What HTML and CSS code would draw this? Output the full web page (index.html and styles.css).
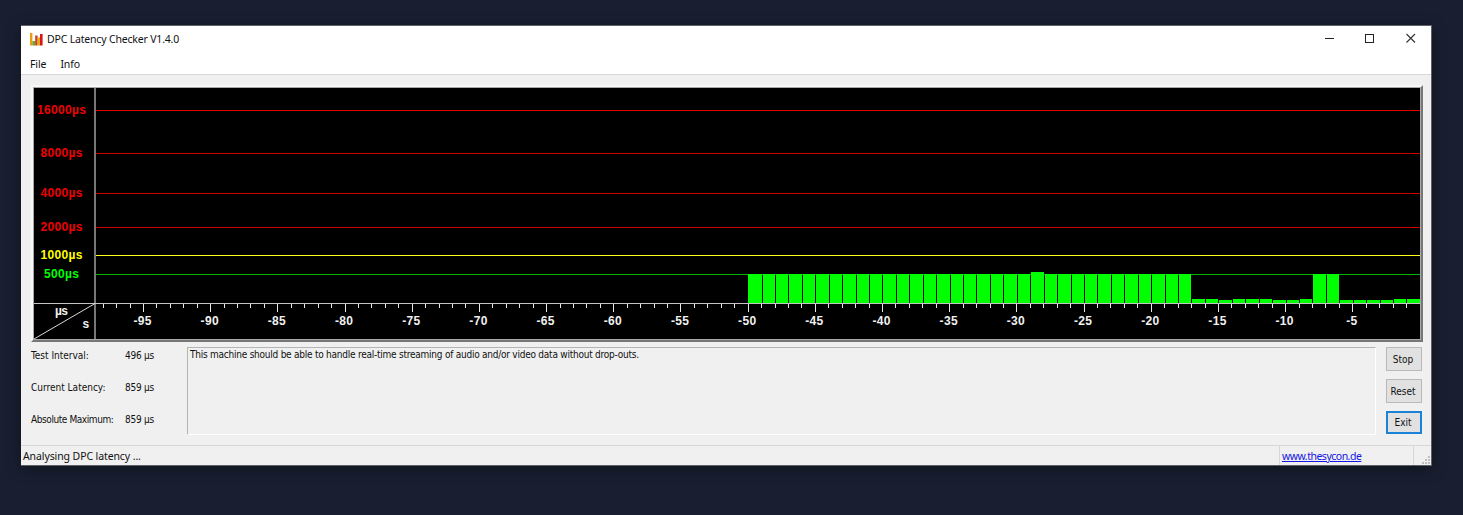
FILE: index.html
```html
<!DOCTYPE html>
<html lang="en">
<head>
    <meta charset="utf-8">
    <title>DPC Latency Checker V1.4.0</title>
    <link rel="stylesheet" href="styles.css">
</head>
<body>

    <div class="window">
        <div class="titlebar">
            <svg class="app-icon" width="14" height="14" viewBox="0 0 14 14">
                <rect x="0" y="1" width="2.4" height="12.5" fill="#eb9d12"/>
                <rect x="2.4" y="9" width="2.8" height="4.5" fill="#6aa82e"/>
                <rect x="5.2" y="3.5" width="2.4" height="10" fill="#cf3a2a"/>
                <rect x="7.6" y="5.5" width="2.4" height="8" fill="#e0b010"/>
                <rect x="10" y="2" width="2.6" height="11.5" fill="#d8141c"/>
            </svg>
            <span class="title">DPC Latency Checker V1.4.0</span>
            <svg class="controls" width="104" height="12" viewBox="0 0 104 12">
                <path d="M5 5.5H14" stroke="#222"/>
                <rect x="45.5" y="1.5" width="8" height="8" fill="none" stroke="#222"/>
                <path d="M86.5 1L95 9.5M95 1L86.5 9.5" stroke="#333" stroke-width="1.1"/>
            </svg>
        </div>
        <div class="menubar">
            <a>File</a>
            <a>Info</a>
        </div>

        <div class="content">
            <div class="chart">
                <svg id="chart" width="1386" height="251" viewBox="34 88 1386 251"></svg>
            </div>

            <div class="bottom">
                <div class="values">
                    <span>Test Interval:</span><span>496 µs</span>
                    <span>Current Latency:</span><span>859 µs</span>
                    <span class="tight">Absolute Maximum:</span><span>859 µs</span>
                </div>
                <div class="message">This machine should be able to handle real-time streaming of audio and/or video data without drop-outs.</div>
                <div class="buttons">
                    <button>Stop</button>
                    <button>Reset</button>
                    <button class="default">Exit</button>
                </div>
            </div>
        </div>

        <div class="statusbar">
            <div class="status">Analysing DPC latency ...</div>
            <div class="link"><a>www.thesycon.de</a></div>
            <div class="grip">
                <svg width="9" height="9" viewBox="0 0 9 9" fill="#bfbfbf">
                    <rect x="6" y="0" width="2" height="2"/>
                    <rect x="3" y="3" width="2" height="2"/>
                    <rect x="6" y="3" width="2" height="2"/>
                    <rect x="0" y="6" width="2" height="2"/>
                    <rect x="3" y="6" width="2" height="2"/>
                    <rect x="6" y="6" width="2" height="2"/>
                </svg>
            </div>
        </div>
    </div>

    <script src="chart.js"></script>
</body>
</html>
```
FILE: styles.css
```css
* {
    margin: 0;
    padding: 0;
    box-sizing: border-box;
}
body {
    height: 515px;
    overflow: hidden;
    padding: 25px 0 0 21px;
    background: #191f31;
    font-family: "DejaVu Sans Condensed", "DejaVu Sans", sans-serif;
    font-size: 10px;
    color: #111;
}
.window {
    display: flex;
    flex-direction: column;
    width: 1411px;
    height: 441px;
    background: #f0f0f0;
    border: 1px solid #5d6066;
    border-left: none;
    box-shadow: 0 3px 14px rgba(0, 0, 0, 0.4);
}
.titlebar {
    display: flex;
    align-items: center;
    height: 26px;
    padding: 0 7px 1px 9px;
    background: white;
    font-family: "Noto Sans", sans-serif;
}
.title {
    margin-left: 3px;
    font-size: 10.5px;
    letter-spacing: -0.18px;
    white-space: nowrap;
}
.controls {
    margin-left: auto;
}
.menubar {
    display: flex;
    gap: 14px;
    height: 23px;
    padding: 4px 9px 0;
    line-height: 16px;
    background: white;
    border-bottom: 1px solid #d9d9d9;
    font-family: "Noto Sans", sans-serif;
    font-size: 10.5px;
    letter-spacing: -0.1px;
}
.content {
    flex: 1;
    padding: 10px 9px 0 10px;
}
.chart {
    width: 1392px;
    height: 257px;
    border: 2px solid;
    border-color: #f8f8f8 #77777a #77777a #f8f8f8;
    background: #a8a8a8;
    padding: 1px;
}
.chart svg {
    display: block;
}
.chart text {
    font-family: "Liberation Sans", Arial, sans-serif;
    font-size: 12px;
    font-weight: bold;
}
.bottom {
    display: flex;
    padding-top: 5px;
    letter-spacing: -0.24px;
}
.values {
    display: grid;
    grid-template-columns: 94px 62px;
    grid-auto-rows: 32px;
    padding-top: 1px;
    line-height: 16px;
    white-space: nowrap;
}
.values span:nth-child(odd) {
    letter-spacing: 0;
}
.values span.tight {
    letter-spacing: -0.42px;
}
.message {
    width: 1189px;
    height: 88px;
    padding: 0 2px;
    border: 1px solid;
    border-color: #b4b4b4 #fff #fff #b4b4b4;
    line-height: 13px;
}
.buttons {
    display: flex;
    flex-direction: column;
    gap: 8px;
    margin-left: 10px;
}
button {
    width: 36px;
    height: 24px;
    padding-right: 2px;
    border: 1px solid #b9b9b9;
    background: #e1e1e1;
    font: inherit;
    color: inherit;
}
button.default {
    height: 23px;
    border: 2px solid #1b82d6;
}
.statusbar {
    display: flex;
    height: 20px;
    border-top: 1px solid #d7d7d7;
    font-family: "Noto Sans", sans-serif;
    font-size: 10.5px;
    line-height: 20px;
}
.status {
    width: 1259px;
    padding-left: 2px;
    border-right: 1px solid #d7d7d7;
    letter-spacing: -0.1px;
}
.link {
    width: 134px;
    padding-left: 2px;
    border-right: 1px solid #d7d7d7;
    color: #1414e6;
    letter-spacing: -0.5px;
}
.link a {
    text-decoration: underline;
}
.grip {
    display: flex;
    flex: 1;
    align-items: flex-end;
    justify-content: flex-end;
}
```
FILE: chart.js
```js
const NS = "http://www.w3.org/2000/svg";
const chart = document.getElementById("chart");

const LEFT = 95, RIGHT = 1420, BASE = 303;

// x position of a time value in seconds
function xOf(t) {
    return 143.4 + (t + 95) * 13.437;
}

function add(name, attrs, text) {
    const el = document.createElementNS(NS, name);
    for (const key in attrs) el.setAttribute(key, attrs[key]);
    if (text) el.textContent = text;
    chart.appendChild(el);
}

function rect(x, y, width, height, fill) {
    add("rect", { x, y, width, height, fill });
}

function label(x, y, width, text, fill) {
    add("text", { x: x - width / 2, y, fill, textLength: width }, text);
}

rect(34, 88, 1386, 251, "#000");

const levels = [
    ["16000µs", 110, 49, "#f00000", "#e00000"],
    ["8000µs", 153, 42, "#f00000", "#cc0000"],
    ["4000µs", 193, 42, "#f00000", "#cc0000"],
    ["2000µs", 227, 42, "#f00000", "#cc0000"],
    ["1000µs", 255, 42, "#ffff00", "#ffff20"],
    ["500µs", 274, 35, "#00ff00", "#00b400"]
];
for (const [text, y, width, color, line] of levels) {
    rect(LEFT, y, RIGHT - LEFT, 1, line);
    label(61.5, y + 4, width, text, color);
}

// bar tops, one for each second from -50
const tops = Array(33).fill(274).concat(
    [299, 299, 300, 299, 299, 299, 300, 300, 299, 274, 274, 300, 300, 300, 300, 299, 299]);
tops[21] = 272;
tops.forEach((top, i) => {
    const x = Math.round(xOf(i - 50));
    const end = Math.min(Math.round(xOf(i - 49)), RIGHT);
    rect(x + (i ? 1 : 0), top, end - x - (i ? 1 : 0), BASE - top, "#00ff00");
});

rect(94, 88, 2, 251, "#777");
rect(34, BASE, 1386, 1, "#c4c4c4");
add("path", { d: "M34 339L95 303.5", stroke: "#d8d8d8" });

for (let t = -98; t < 0; t++) {
    const major = t % 5 === 0;
    rect(Math.round(xOf(t) - 0.4), BASE + 1, 1, major ? 8 : 4, "#e8e8e8");
    if (major) label(xOf(t) - 1, 325.4, t === -5 ? 11 : 18, String(t), "#f0f0f0");
}

label(61.5, 315, 13, "µs", "#f0f0f0");
label(85.5, 328, 6, "s", "#f0f0f0");
```
